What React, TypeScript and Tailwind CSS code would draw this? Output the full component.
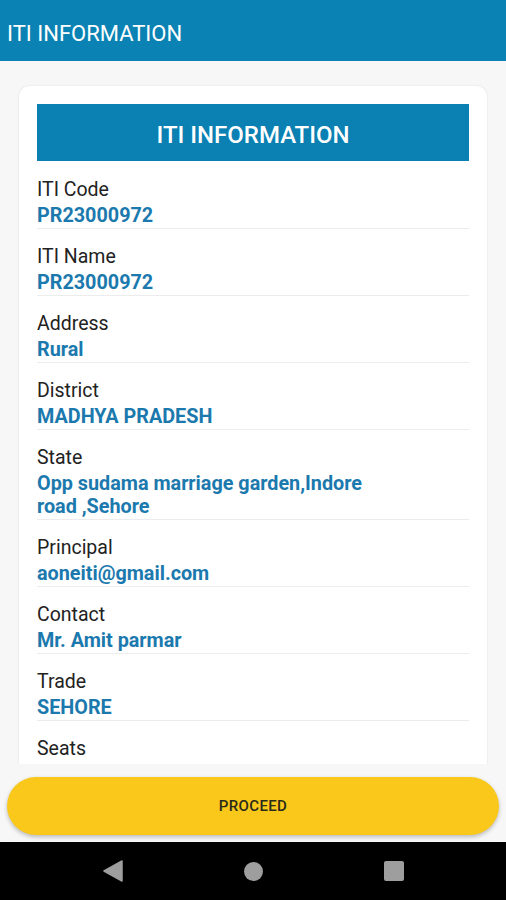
import { ReactNode } from "react";

const rows: { label: string; value: ReactNode }[] = [
  { label: "ITI Code", value: "PR23000972" },
  { label: "ITI Name", value: "PR23000972" },
  { label: "Address", value: "Rural" },
  { label: "District", value: "MADHYA PRADESH" },
  {
    label: "State",
    value: (
      <>
        Opp sudama marriage garden,Indore
        <br />
        road ,Sehore
      </>
    ),
  },
  { label: "Principal", value: "aoneiti@gmail.com" },
  { label: "Contact", value: "Mr. Amit parmar" },
  { label: "Trade", value: "SEHORE" },
  { label: "Seats", value: "20" },
];

function InfoRow({ label, value }: { label: string; value: ReactNode }) {
  return (
    <div className="border-b border-[#ececec] pt-[17px] pb-[1px]">
      <p className="text-[19.5px] leading-[22px] text-[#222]">{label}</p>
      <p className="mt-[3px] text-[19.8px] leading-[23px] font-bold text-[#1b79ae]">{value}</p>
    </div>
  );
}

export default function App() {
  return (
    <div
      className="flex h-[900px] w-[506px] flex-col overflow-hidden bg-[#f7f7f7]"
      style={{ fontFamily: "Roboto, 'Noto Sans', sans-serif" }}
    >
      {/* top app bar */}
      <div className="flex h-[61px] shrink-0 items-center bg-[#0a83b4] px-[7px] pt-[5px]">
        <h1 className="text-[22px] text-white">ITI INFORMATION</h1>
      </div>

      {/* scroll area */}
      <div className="flex-1 overflow-hidden px-[19px] pt-[25px]">
        <div className="rounded-[10px] bg-white px-[18px] pt-[18px] pb-6 shadow-[0_0_2px_rgba(0,0,0,0.12)]">
          <div className="mb-px flex h-[57px] items-center justify-center bg-[#0a80b3] pt-[4px]">
            <h2 className="text-[24px] font-medium text-white">ITI INFORMATION</h2>
          </div>
          {rows.map((r) => (
            <InfoRow key={r.label} label={r.label} value={r.value} />
          ))}
        </div>
      </div>

      {/* proceed */}
      <div className="shrink-0 px-[7px] pt-[13px] pb-[7px]">
        <button className="flex h-[58px] w-full items-center justify-center rounded-full bg-[#f9c81a] text-[15px] font-medium tracking-wide text-[#2a2a1a] shadow-[0_2px_4px_rgba(0,0,0,0.25)]">
          PROCEED
        </button>
      </div>

      {/* android nav bar */}
      <div className="flex h-[58px] shrink-0 items-center justify-center gap-[121px] bg-black">
        <svg width="20" height="22" viewBox="0 0 20 22">
          <path d="M19 1 L1 11 L19 21 Z" fill="#9e9e9e" stroke="#9e9e9e" strokeWidth="1.5" strokeLinejoin="round" />
        </svg>
        <span className="h-[19px] w-[19px] rounded-full bg-[#9e9e9e]" />
        <span className="h-[20px] w-[20px] rounded-[2px] bg-[#9e9e9e]" />
      </div>
    </div>
  );
}
